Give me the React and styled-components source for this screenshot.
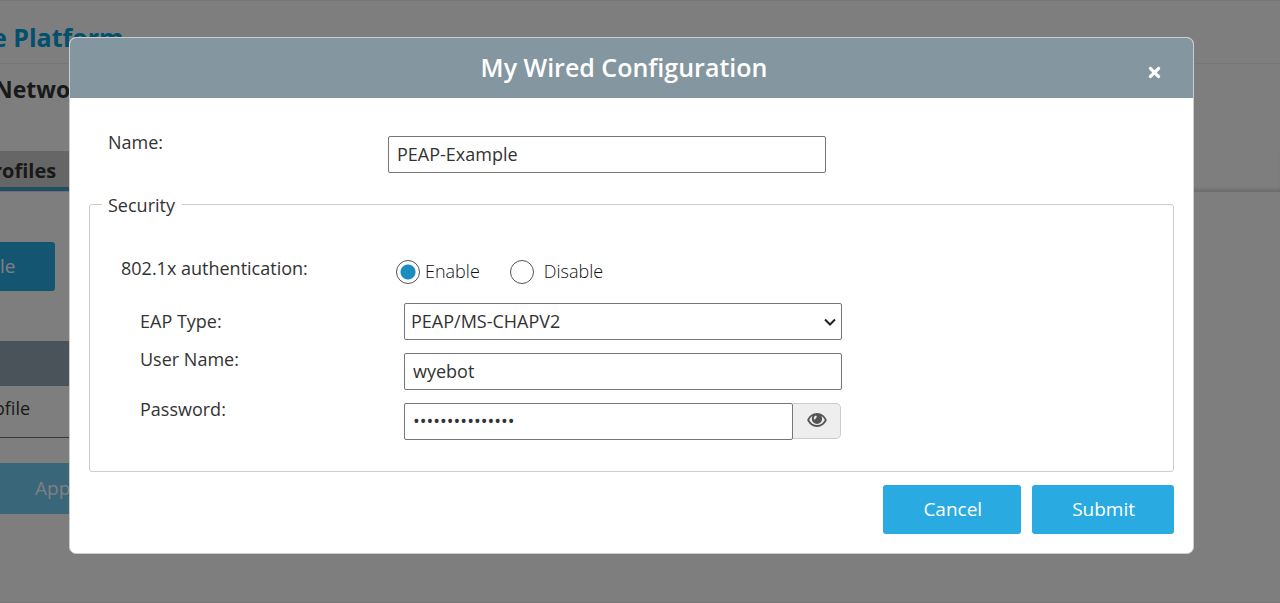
import { useState } from 'react';
import styled, { createGlobalStyle } from 'styled-components';
import { FaTimes } from 'react-icons/fa';

const EyeIcon = () => (
    <svg width="20" height="14" viewBox="0 0 20 14" aria-hidden="true">
        <path
            fill="#555555"
            fillRule="evenodd"
            d="M10 0C5.500 0 1.900 3 .2 7c1.700 4 5.300 7 9.800 7s8.100-3 9.800-7C18.100 3 14.500 0 10 0zM5.400 3A5.200 5.200 0 0 0 4.900 6a5.100 5.100 0 0 0 10.200 0c0-1.100-.2-2.100-.6-3 1.500.9 2.500 2.300 3.300 4-1.500 3-4.300 5-7.800 5S3.700 10 2.200 7C3 5.300 4 3.900 5.400 3zM8.200 2.800c.8-.5 1.800.2 1.500 1.100-.3.800-1 .7-1.100 1.800-.1.900-1.500 1-1.700 0-.1-1.100.4-2.300 1.300-2.900z"
        />
    </svg>
);

const ChevronIcon = () => (
    <svg width="12" height="8" viewBox="0 0 12 8" aria-hidden="true">
        <path fill="none" stroke="#222222" strokeWidth="2" d="M1 1.500l5 5 5-5" />
    </svg>
);

const App = () => {
    const [auth, setAuth] = useState('enable');
    const [showPassword, setShowPassword] = useState(false);

	return (
        <>
        <GlobalStyle />
        <Page>
            <TopBar>e Platform</TopBar>
            <PageTitle>Network</PageTitle>
            <Tabs>
                <Tab href="#profiles">rofiles</Tab>
            </Tabs>
            <Content>
                <ProfileButton type="button">le</ProfileButton>
                <Table>
                    <thead>
                        <tr><th scope="col" aria-label="Name" /></tr>
                    </thead>
                    <tbody>
                        <tr><td>ofile</td></tr>
                    </tbody>
                </Table>
                <ApplyButton type="button">Apply</ApplyButton>
            </Content>
        </Page>
        <Overlay>
            <Modal role="dialog" aria-labelledby="modal-title">
                <ModalHeader>
                    <ModalTitle id="modal-title">My Wired Configuration</ModalTitle>
                    <CloseButton type="button" aria-label="Close"><FaTimes size={17} /></CloseButton>
                </ModalHeader>
                <Form onSubmit={(e) => e.preventDefault()}>
                    <Row $indent={19} $label={280}>
                        <Label htmlFor="name">Name:</Label>
                        <Input type="text" id="name" name="name" defaultValue="PEAP-Example" />
                    </Row>
                    <Fieldset>
                        <Legend>Security</Legend>
                        <AuthRow role="radiogroup" aria-labelledby="auth" $indent={19} $label={275}>
                            <Label as="span" id="auth">802.1x authentication:</Label>
                            <RadioGroup>
                                <RadioLabel $gap={5}>
                                    <Radio type="radio" name="auth" checked={auth === 'enable'} onChange={() => setAuth('enable')} />
                                    Enable
                                </RadioLabel>
                                <RadioLabel $gap={10}>
                                    <Radio type="radio" name="auth" checked={auth === 'disable'} onChange={() => setAuth('disable')} />
                                    Disable
                                </RadioLabel>
                            </RadioGroup>
                        </AuthRow>
                        <Row $indent={38} $label={264} $center>
                            <Label htmlFor="eap">EAP Type:</Label>
                            <SelectBox>
                                <Select id="eap" name="eap">
                                    <option>PEAP/MS-CHAPV2</option>
                                </Select>
                                <ChevronIcon />
                            </SelectBox>
                        </Row>
                        <Row $indent={38} $label={264}>
                            <Label htmlFor="user">User Name:</Label>
                            <Input type="text" id="user" name="user" defaultValue="wyebot" />
                        </Row>
                        <Row $indent={38} $label={264}>
                            <Label htmlFor="password">Password:</Label>
                            <InputGroup>
                                <Input type={showPassword ? 'text' : 'password'} id="password" name="password" defaultValue="examplepassword" />
                                <EyeButton type="button" aria-label="Show password" onClick={() => setShowPassword(!showPassword)}>
                                    <EyeIcon />
                                </EyeButton>
                            </InputGroup>
                        </Row>
                    </Fieldset>
                    <Actions>
                        <Button type="button">Cancel</Button>
                        <Button type="submit">Submit</Button>
                    </Actions>
                </Form>
            </Modal>
        </Overlay>
        </>
	);
};

export default App;

const GlobalStyle = createGlobalStyle`
  * {
    box-sizing: border-box;
  }
  body {
    margin: 0;
    background: #fcfcfc;
    color: #333333;
    font-family: "Open Sans", "Noto Sans", sans-serif;
    font-size: 18px;
    line-height: 24px;
  }
  button, input, select {
    font: inherit;
    color: inherit;
  }
`;
const Page = styled.div`
  min-height: 100vh;
  overflow: hidden;
  border-top: 1px solid #eeeeee;
  border-bottom: 1px solid #eeeeee;
`;
const TopBar = styled.header`
  height: 63px;
  margin-left: -8px;
  padding-top: 19px;
  border-bottom: 1px solid #eeeeee;
  color: #00a0dc;
  font-size: 25px;
  font-weight: 700;
  line-height: 34px;
`;
const PageTitle = styled.h1`
  height: 87px;
  margin: 0 0 0 -4px;
  padding-top: 9px;
  font-size: 23px;
  font-weight: 700;
  line-height: 32px;
  text-indent: -2px;
`;
const Tabs = styled.nav`
  display: flex;
  border-bottom: 1px solid #dddddd;
  box-shadow: inset 0 -3px 3px -1px #dadada;
`;
const Tab = styled.a`
  width: 160px;
  height: 40px;
  padding-top: 7px;
  border-bottom: 4px solid #3d9fc5;
  background: #cccccc;
  color: inherit;
  font-size: 20px;
  font-weight: 700;
  line-height: 26px;
  text-decoration: none;
  text-indent: -7px;
`;
const Content = styled.main`
  padding-top: 50px;
`;
const ProfileButton = styled.button`
  display: block;
  width: 55px;
  height: 49px;
  padding: 0 0 2px;
  border: 0;
  border-radius: 0 3px 3px 0;
  background: #29abe2;
  color: #fff;
  font-size: 19px;
  text-align: left;
`;
const Table = styled.table`
  width: 160px;
  margin: 50px 0 25px;
  border-collapse: separate;
  border-spacing: 0;
  th {
    height: 45px;
    padding: 0;
    background: #96a6b4;
  }
  td {
    height: 52px;
    padding: 0 0 8px;
    border-bottom: 1px solid #65747e;
    text-indent: -6px;
  }
`;
const ApplyButton = styled.button`
  width: 120px;
  height: 51px;
  padding: 0 0 2px 35px;
  border: 0;
  background: #74ccf4;
  color: #fff;
  font-size: 19px;
  text-align: left;
`;
const Overlay = styled.div`
  position: fixed;
  inset: 0;
  overflow: auto;
  padding: 37px 86px 37px 69px;
  background: rgba(0, 0, 0, 0.5);
`;
const Modal = styled.div`
  overflow: hidden;
  border: 1px solid #cccccc;
  border-radius: 7px;
  background: #fff;
`;
const ModalHeader = styled.div`
  display: grid;
  grid-template-columns: 45px 1fr 60px;
  align-items: center;
  height: 60px;
  padding: 0 9px;
  background: #84969f;
  color: #fff;
`;
const ModalTitle = styled.h2`
  grid-column: 2;
  margin: 0;
  padding-bottom: 2px;
  font-size: 25px;
  font-weight: 600;
  line-height: 34px;
  text-align: center;
`;
const CloseButton = styled.button`
  display: flex;
  justify-content: center;
  padding: 8px 0 0;
  border: 0;
  background: none;
  cursor: pointer;
`;
const Form = styled.form`
  padding: 33px 19px 19px;
`;
const Row = styled.div`
  display: grid;
  grid-template-columns: ${({ $label }) => $label}px minmax(0, 438px);
  align-items: ${({ $center }) => ($center ? 'center' : 'start')};
  padding: ${({ $center }) => ($center ? '5px 0 8px' : '0 0 8px')};
  padding-left: ${({ $indent }) => $indent}px;
  > input,
  > div {
    margin-top: ${({ $center }) => ($center ? 0 : 5)}px;
  }
`;
const AuthRow = styled(Row)`
  > div {
    margin-top: 3px;
  }
`;
const Label = styled.label`
  padding-bottom: 2px;
  line-height: 22px;
`;
const Input = styled.input`
  width: 100%;
  height: 37px;
  padding: 0 8px 2px;
  border: 1px solid #767676;
  border-radius: 2px;
  background: #fff;
  outline: none;
`;
const SelectBox = styled.div`
  display: flex;
  align-items: center;
  svg {
    flex: none;
    margin-left: -18px;
    pointer-events: none;
  }
`;
const Select = styled.select`
  appearance: none;
  width: 100%;
  height: 37px;
  padding: 0 24px 2px 6px;
  border: 1px solid #767676;
  border-radius: 2px;
  background: #fff;
`;
const Fieldset = styled.fieldset`
  margin: 12px 0 0;
  padding: 41px 12px 23px;
  border: 1px solid #cccccc;
  border-radius: 3px;
`;
const Legend = styled.legend`
  padding: 1px 7px 0 6px;
  line-height: 22px;
`;
const RadioGroup = styled.div`
  display: flex;
  gap: 30px;
  height: 30px;
`;
const RadioLabel = styled.label`
  display: flex;
  gap: ${({ $gap }) => $gap}px;
  color: #111111;
  font-weight: 300;
  line-height: 22px;
`;
const Radio = styled.input`
  appearance: none;
  width: 24px;
  height: 24px;
  margin: 0;
  border: 1px solid #555555;
  border-radius: 50%;
  background: #fff;
  &:checked {
    background: radial-gradient(circle, #1c8dc0 7px, #fff 8px);
  }
`;
const InputGroup = styled.div`
  display: flex;
  padding-right: 1px;
`;
const EyeButton = styled.button`
  display: flex;
  flex: none;
  justify-content: center;
  width: 48px;
  height: 36px;
  padding: 9px 0 0;
  border: 1px solid #cccccc;
  border-left: 0;
  border-radius: 0 5px 5px 0;
  background: #eeeeee;
`;
const Actions = styled.div`
  display: flex;
  justify-content: flex-end;
  gap: 11px;
  margin-top: 13px;
`;
const Button = styled.button`
  height: 49px;
  padding: 0 39px 2px 40px;
  border: 0;
  border-radius: 3px;
  background: #29abe2;
  color: #fff;
  font-size: 19px;
  cursor: pointer;
`;
